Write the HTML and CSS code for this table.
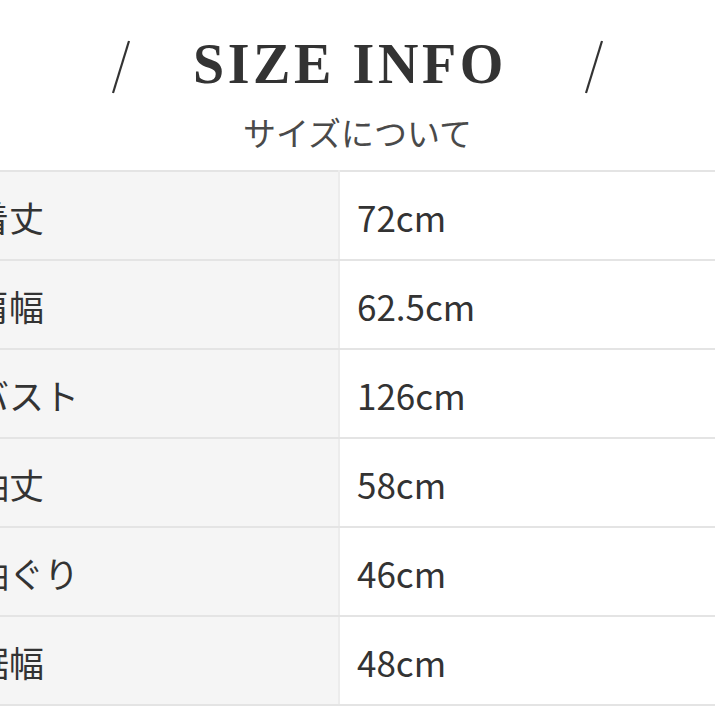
FILE: index.html
```html
<!DOCTYPE html>
<html lang="ja">
<head>
<meta charset="utf-8">
<link rel="stylesheet" href="styles.css">
</head>
<body>
<div class="page">
  <header class="head">
    <svg class="slash slash-l" width="20" height="54" viewBox="0 0 20 54"><line x1="18" y1="1" x2="2" y2="53" stroke="#333" stroke-width="2.2"/></svg>
    <h1 class="title">SIZE INFO</h1>
    <svg class="slash slash-r" width="20" height="54" viewBox="0 0 20 54"><line x1="18" y1="1" x2="2" y2="53" stroke="#333" stroke-width="2.2"/></svg>
  </header>
  <p class="sub">サイズについて</p>
  <table class="size">
    <tr><th>着丈</th><td>72cm</td></tr>
    <tr><th>肩幅</th><td>62.5cm</td></tr>
    <tr><th>バスト</th><td>126cm</td></tr>
    <tr><th>袖丈</th><td>58cm</td></tr>
    <tr><th>袖ぐり</th><td>46cm</td></tr>
    <tr><th>裾幅</th><td>48cm</td></tr>
  </table>
</div>
</body>
</html>
```
FILE: styles.css
```css
html, body {
  margin: 0;
  padding: 0;
  background: #fff;
}
body {
  width: 715px;
  height: 715px;
  overflow: hidden;
  font-family: "Noto Sans CJK JP", "Noto Sans", sans-serif;
  color: #333;
}
.page {
  padding-top: 38px;
}
.head {
  display: flex;
  justify-content: center;
  align-items: center;
  height: 58px;
}
.slash-l {
  margin-right: 62px;
}
.slash-r {
  margin-left: 77px;
}
.title {
  margin: -6px 0 0;
  font-family: "Liberation Serif", serif;
  font-weight: 700;
  font-size: 56px;
  letter-spacing: 3.6px;
  line-height: 1;
  color: #333;
}
.sub {
  margin: 17px 0 0;
  text-align: center;
  font-size: 33px;
  line-height: 1.2;
  color: #4a4a4a;
}
.size {
  margin: 17px 0 0 -46px;
  width: 761px;
  border-collapse: collapse;
  border-top: 2px solid #e4e4e4;
}
.size th, .size td {
  height: 85px;
  padding: 2px 0 0 17px;
  border-bottom: 2px solid #e4e4e4;
  font-size: 35px;
  font-weight: 400;
  text-align: left;
  color: #333;
  line-height: 1;
}
.size th {
  width: 364px;
  padding-left: 20px;
  background: #f5f5f5;
  border-right: 2px solid #ececec;
}
```
